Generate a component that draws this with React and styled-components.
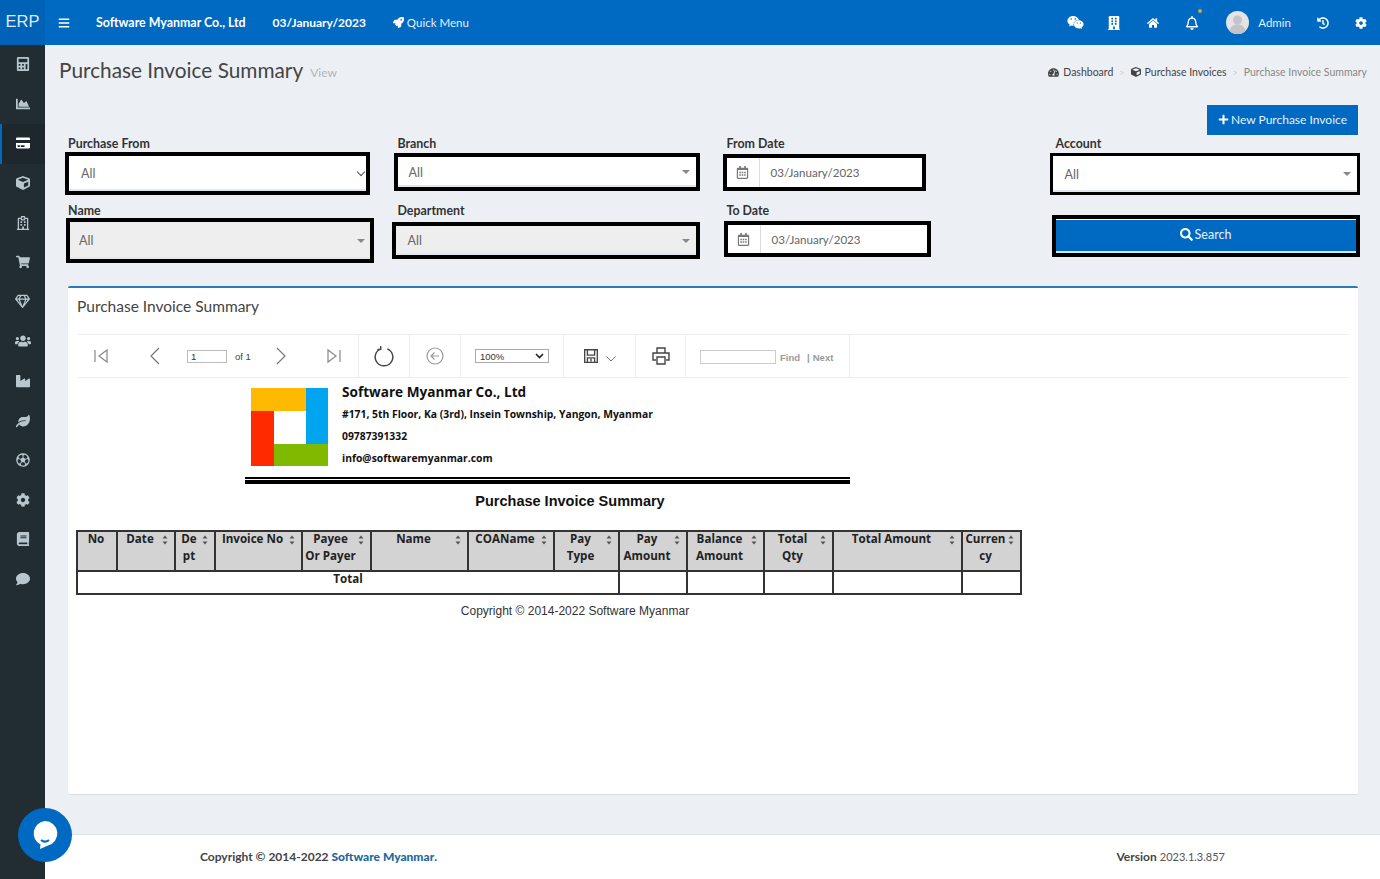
import React from 'react';
import styled, { createGlobalStyle } from 'styled-components';
import {
  FaBars, FaBook, FaBuilding, FaCalculator, FaChartArea, FaCog, FaComment, FaCreditCard, FaCube,
  FaHistory, FaHome, FaIndustry, FaLeaf, FaPlus, FaRegBell, FaRegCalendarAlt, FaRegFutbol, FaRegGem,
  FaRegHospital, FaRocket, FaSearch, FaShoppingCart, FaTachometerAlt, FaUsers, FaWeixin
} from 'react-icons/fa';

const uiFont = '"Lato", "Noto Sans", sans-serif';

const GlobalStyle = createGlobalStyle`
  html, body { margin: 0; padding: 0; }
  body { font-family: ${uiFont}; color: #333; background: #ecf0f5; }
  * { box-sizing: border-box; }
`;

// =============================================================================

const Shell = styled.div`
  position: relative;
  width: 1380px;
  height: 879px;
  overflow: hidden;
  display: grid;
  grid-template-columns: 45px 1fr;
  grid-template-rows: 45px 1fr;
`;

const Brand = styled.div`
  background: #0062b6;
  color: #dfeaf5;
  font: 16.5px/43px "Liberation Sans", sans-serif;
  text-align: center;
`;

const TopBar = styled.header`
  background: #0069c2;
  color: #fff;
  display: flex;
  align-items: center;
  padding-left: 13px;
`;

const TopTitle = styled.b`
  margin-left: ${p => p.$gap}px;
  font-size: ${p => p.$size}px;
`;

const QuickMenu = styled.span`
  margin-left: 27px;
  display: flex;
  align-items: center;
  gap: 3px;
  font-size: 11.5px;
  color: #e6f0fa;
`;

const TopRight = styled.div`
  margin-left: auto;
  display: flex;
  align-items: center;
  height: 100%;
`;

const TopIcon = styled.span`
  width: ${p => p.$w}px;
  display: flex;
  justify-content: center;
  position: relative;
  font-size: ${p => p.$size || 14}px;
`;

const Dot = styled.i`
  position: absolute;
  top: -7px;
  left: 25px;
  width: 4px;
  height: 4px;
  border-radius: 50%;
  background: #c9a35a;
`;

const Avatar = styled.svg`
  width: 23px;
  height: 23px;
  margin-left: 14.5px;
`;

const AdminName = styled.span`
  margin: 0 13px 0 9px;
  font-size: 11.5px;
  color: #e6f0fa;
`;

const Sidebar = styled.nav`
  background: #222d32;
  display: flex;
  flex-direction: column;
`;

const SideItem = styled.div`
  height: 39.6px;
  display: flex;
  align-items: center;
  justify-content: center;
  font-size: 14px;
  color: ${p => (p.$active ? '#fff' : '#b8c7ce')};
  background: ${p => (p.$active ? '#1e282c' : 'transparent')};
  border-left: 2px solid ${p => (p.$active ? '#0069c2' : 'transparent')};
  padding: 0 2px 1px 0;
`;

const Main = styled.main`
  display: flex;
  flex-direction: column;
  min-width: 0;
`;

const PageHead = styled.div`
  height: 60px;
  padding: 0 13px 11px 14px;
  display: flex;
  align-items: center;
`;

const PageTitle = styled.h1`
  margin: 0;
  font-size: 20.8px;
  font-weight: 400;
  color: #444;
`;

const PageSub = styled.small`
  margin: 5px 0 0 7px;
  font-size: 12px;
  color: #aeb4ba;
`;

const Crumbs = styled.div`
  margin: 5px 0 0 auto;
  display: flex;
  align-items: center;
  font-size: 10.5px;
  color: #444;
`;

const Crumb = styled.span`
  display: flex;
  align-items: center;
  gap: 4px;
  color: ${p => (p.$muted ? '#888' : '#444')};
`;

const CrumbSep = styled.span`
  margin: 0 6px;
  color: #ccc;
  font-size: 9px;
`;

const ActionRow = styled.div`
  height: 31px;
  padding-right: 22px;
  display: flex;
  justify-content: flex-end;
`;

const NewButton = styled.div`
  width: 151px;
  height: 30px;
  padding-bottom: 2px;
  background: #0069c2;
  color: #e8f1fa;
  font-size: 12px;
  display: flex;
  align-items: center;
  justify-content: center;
  gap: 2px;
  svg { color: #fff; font-size: 11px; }
`;

const FilterGrid = styled.div`
  display: grid;
  grid-template-columns: 329.5px 329px 329px 303px;
  grid-template-rows: 67px 83px;
  padding-left: 22px;
`;

const Field = styled.div`
  min-width: 0;
`;

const FieldLabel = styled.label`
  display: block;
  height: 14px;
  margin: 1px 0 0 1px;
  font-size: 12.4px;
  line-height: 14px;
  font-weight: 700;
  color: #333;
`;

const Outline = styled.div`
  width: ${p => p.$w}px;
  height: ${p => p.$h}px;
  margin-left: ${p => p.$x || 0}px;
  margin-top: ${p => p.$y || 0}px;
  border: ${p => p.$b || 4}px solid #000;
  background: #fff;
  display: flex;
`;

const SelectBox = styled.div`
  flex: 1;
  display: flex;
  align-items: center;
  justify-content: space-between;
  padding: 0 5.5px 0 ${p => p.$pad}px;
  font-size: 12.5px;
  color: #666;
  background: ${p => (p.$disabled ? '#eee' : '#fff')};
  box-shadow: inset 0 -2px 0 #e2e6ee;
`;

const Caret = styled.i`
  width: 0;
  height: 0;
  border: 4px solid transparent;
  border-top: 4px solid #888;
  border-bottom-width: 0;
`;

const Chevron = styled.i`
  width: 6px;
  height: 6px;
  margin: -3px -3px 0 0;
  border-right: 1.5px solid #555;
  border-bottom: 1.5px solid #555;
  transform: rotate(45deg);
`;

const CalendarAddon = styled.span`
  width: 33px;
  display: flex;
  align-items: center;
  justify-content: center;
  color: #777;
  font-size: 13px;
  border-right: 1px solid #ddd;
`;

const DateText = styled.span`
  flex: 1;
  align-self: center;
  padding-left: 11px;
  font-size: 11.6px;
  color: #666;
`;

const SearchButton = styled.div`
  flex: 1;
  display: flex;
  align-items: center;
  justify-content: center;
  gap: 2px;
  background: #0069c2;
  color: #e8f1fa;
  font-size: 12.5px;
  padding-bottom: 3px;
  border-top: 1px solid #fff;
  border-bottom: 2px solid #d8e6f3;
  svg { color: #fff; font-size: 13px; }
`;

const Card = styled.section`
  flex: 1;
  margin: 0 22px 40px 23px;
  background: #fff;
  border-top: 2px solid #2a7ab8;
  border-radius: 2px;
  box-shadow: 0 1px 1px rgba(0, 0, 0, 0.08);
  padding: 0 9px;
  min-height: 0;
`;

const CardTitle = styled.h3`
  margin: 0;
  height: 46px;
  font-size: 15.5px;
  line-height: 36px;
  font-weight: 400;
  color: #444;
`;

const Toolbar = styled.div`
  height: 44px;
  display: flex;
  border-top: 1px solid #eee;
  border-bottom: 1px solid #eee;
`;

const ToolCell = styled.div`
  flex: none;
  width: ${p => p.$w}px;
  display: flex;
  align-items: center;
  justify-content: ${p => (p.$start ? 'flex-start' : 'center')};
  border-right: 1px solid #eee;
  color: #555;
`;

const ToolSlot = styled.span`
  flex: none;
  width: ${p => p.$w}px;
  padding-left: ${p => p.$pl || 0}px;
  display: flex;
  justify-content: center;
`;

const PageInput = styled.span`
  flex: none;
  width: 40px;
  height: 13px;
  margin-left: 2px;
  border: 1px solid #bbb;
  font: 9.5px/11px "Liberation Sans", sans-serif;
  padding-left: 3px;
  color: #333;
`;

const OfText = styled.span`
  flex: none;
  width: 30px;
  margin-left: 8px;
  font: 9.5px "Liberation Sans", sans-serif;
  color: #444;
`;

const ZoomSelect = styled.span`
  width: 74px;
  height: 14px;
  border: 1px solid #aaa;
  display: flex;
  align-items: center;
  justify-content: space-between;
  padding: 0 4px;
  font: 9.5px "Liberation Sans", sans-serif;
  color: #333;
`;

const FindInput = styled.span`
  width: 76px;
  height: 14px;
  margin: 2px 4px 0 14px;
  border: 1px solid #ccc;
`;

const FindLink = styled.span`
  margin-top: 2px;
  margin-right: ${p => p.$gap || 0}px;
  font: 700 9.5px "Liberation Sans", sans-serif;
  color: #999;
`;

const ReportHead = styled.div`
  display: flex;
  gap: 14px;
  padding: 10px 0 0 174px;
  height: 99px;
`;

const ReportLines = styled.div`
  display: flex;
  flex-direction: column;
  font-family: "Open Sans", sans-serif;
  color: #111;
`;

const Company = styled.b`
  font-size: 13.6px;
  line-height: 8px;
  height: 15px;
`;

const CompanyLine = styled.b`
  font-size: 10.35px;
  line-height: 22px;
  height: 22px;
`;

const DoubleRule = styled.div`
  width: 605px;
  height: 7px;
  margin-left: 168px;
  border-top: 2px solid #000;
  border-bottom: 4px solid #000;
`;

const ReportTitle = styled.div`
  width: 986px;
  margin-top: 8px;
  height: 38px;
  text-align: center;
  font: 700 14.5px/18px "Liberation Sans", sans-serif;
  color: #111;
`;

const SummaryTable = styled.table`
  width: 944px;
  margin-left: -1px;
  table-layout: fixed;
  border-collapse: collapse;
  font-family: "Open Sans", sans-serif;
  font-size: 11.6px;
  color: #222;
  th, td { border: 2px solid #333; padding: 0; }
  th { background: #d3d3d3; height: 40px; vertical-align: top; }
  td { height: 23px; vertical-align: top; font-weight: 700; text-align: center; line-height: 13px; }
`;

const HeadInner = styled.div`
  display: grid;
  grid-template-columns: 1fr ${p => (p.$sort ? '10px' : '0')};
  margin-top: -2px;
  padding: 0 4px 0 2px;
  line-height: 17px;
  text-align: center;
  white-space: nowrap;
`;

const SortMark = styled.svg`
  width: 6px;
  height: 10px;
  margin: 5px 0 0 2px;
`;

const Copy = styled.div`
  width: 996px;
  margin-top: 9px;
  text-align: center;
  font: 12px "Liberation Sans", sans-serif;
  color: #333;
`;

const Footer = styled.footer`
  height: 45px;
  flex: none;
  background: #fff;
  border-top: 1px solid #dde1e7;
  display: flex;
  align-items: center;
  padding: 0 155px 2px;
  justify-content: space-between;
  font-size: 12px;
  color: #444;
`;

const FooterLink = styled.b`
  color: #23689f;
`;

const VersionText = styled.span`
  font-size: 11px;
  font-weight: 400;
  color: #555;
`;

const ChatBubble = styled.div`
  position: absolute;
  left: 18px;
  top: 808px;
  width: 54px;
  height: 54px;
  border-radius: 50%;
  background: #0069c2;
  display: flex;
  align-items: center;
  justify-content: center;
`;

// =============================================================================

const sideIcons = [
  [FaCalculator], [FaChartArea], [FaCreditCard], [FaCube], [FaRegHospital], [FaShoppingCart], [FaRegGem, 15],
  [FaUsers, 16], [FaIndustry], [FaLeaf], [FaRegFutbol], [FaCog], [FaBook], [FaComment]
];

const cols = [40, 58, 40, 87, 69, 97, 86, 65, 68, 77, 69, 129, 59];

const heads = [
  ['No'], ['Date'], ['De', 'pt'], ['Invoice No'], ['Payee', 'Or Payer'], ['Name'], ['COAName'],
  ['Pay', 'Type'], ['Pay', 'Amount'], ['Balance', 'Amount'], ['Total', 'Qty'], ['Total Amount'], ['Curren', 'cy']
];

const Sort = () =>
  <SortMark viewBox="0 0 6 10">
    <path d="M3 0.500 5.500 3.500H0.500zM3 9.500 0.500 6.500H5.500z" fill="#555" />
  </SortMark>;

const ToolIcon = ({ w = 20, h = 20, children }) =>
  <svg width={w} height={h} viewBox="0 0 20 20" fill="none" stroke="#666" strokeWidth="1.2">
    {children}
  </svg>;

const SelectField = ({ label, w, h, x, y, b, pad = 12, disabled, chevron }) =>
  <Field>
    <FieldLabel>{label}</FieldLabel>
    <Outline $w={w} $h={h} $x={x} $y={y} $b={b}>
      <SelectBox $pad={pad} $disabled={disabled}>
        All
        {chevron ? <Chevron /> : <Caret />}
      </SelectBox>
    </Outline>
  </Field>;

const DateField = ({ label, w, h, x, y }) =>
  <Field>
    <FieldLabel>{label}</FieldLabel>
    <Outline $w={w} $h={h} $x={x} $y={y}>
      <CalendarAddon><FaRegCalendarAlt /></CalendarAddon>
      <DateText>03/January/2023</DateText>
    </Outline>
  </Field>;

export default function App() {
  return (
    <Shell>
      <GlobalStyle />
      <Brand>ERP</Brand>
      <TopBar>
        <FaBars size={12} />
        <TopTitle $gap={26} $size={12.4}>Software Myanmar Co., Ltd</TopTitle>
        <TopTitle $gap={27} $size={12}>03/January/2023</TopTitle>
        <QuickMenu><FaRocket size={11} color="#fff" />Quick Menu</QuickMenu>
        <TopRight>
          <TopIcon $w={39} $size={17}><FaWeixin /></TopIcon>
          <TopIcon $w={39}><FaBuilding /></TopIcon>
          <TopIcon $w={39} $size={12}><FaHome /></TopIcon>
          <TopIcon $w={39}><FaRegBell /><Dot /></TopIcon>
          <Avatar viewBox="0 0 23 23">
            <circle cx="11.500" cy="11.500" r="11.500" fill="#e4e4e6" />
            <circle cx="11.500" cy="9" r="4.500" fill="#c4c4c8" />
            <path d="M3.500 20c1-5 4.500-6.500 8-6.500s7 1.500 8 6.500a11.500 11.500 0 0 1-16 0z" fill="#c4c4c8" />
          </Avatar>
          <AdminName>Admin</AdminName>
          <TopIcon $w={38} $size={12}><FaHistory /></TopIcon>
          <TopIcon $w={38} $size={12}><FaCog /></TopIcon>
        </TopRight>
      </TopBar>

      <Sidebar>
        {sideIcons.map(([Icon, size], i) =>
          <SideItem key={i} $active={i === 2}><Icon size={size} /></SideItem>
        )}
      </Sidebar>

      <Main>
        <PageHead>
          <PageTitle>Purchase Invoice Summary</PageTitle>
          <PageSub>View</PageSub>
          <Crumbs>
            <Crumb><FaTachometerAlt size={11} />Dashboard</Crumb>
            <CrumbSep>&gt;</CrumbSep>
            <Crumb><FaCube size={10} />Purchase Invoices</Crumb>
            <CrumbSep>&gt;</CrumbSep>
            <Crumb $muted>Purchase Invoice Summary</Crumb>
          </Crumbs>
        </PageHead>

        <ActionRow>
          <NewButton><FaPlus />New Purchase Invoice</NewButton>
        </ActionRow>

        <FilterGrid>
          <SelectField label="Purchase From" w={305} h={43} x={-2} y={1} pad={12} chevron />
          <SelectField label="Branch" w={306} h={38} x={-3} y={2} pad={11} />
          <DateField label="From Date" w={203} h={37} x={-3} y={3} />
          <SelectField label="Account" w={310} h={42} x={-5} y={2} b={3} pad={12} />

          <SelectField label="Name" w={308} h={45} x={-1} y={0} pad={9} disabled />
          <SelectField label="Department" w={308} h={37} x={-5} y={4} pad={12} disabled />
          <DateField label="To Date" w={207} h={36} x={-2} y={3} />
          <Field>
            <Outline $w={308} $h={42} $x={-3} $y={12}>
              <SearchButton><FaSearch />Search</SearchButton>
            </Outline>
          </Field>
        </FilterGrid>

        <Card>
          <CardTitle>Purchase Invoice Summary</CardTitle>
          <Toolbar>
            <ToolCell $w={282} $start>
              <ToolSlot $w={48}>
                <ToolIcon><path d="M4 4v12M16 4 8 10l8 6z" stroke="#888" /></ToolIcon>
              </ToolSlot>
              <ToolSlot $w={60}>
                <ToolIcon><path d="M14 2 6 10l8 8" stroke="#777" /></ToolIcon>
              </ToolSlot>
              <PageInput>1</PageInput>
              <OfText>of 1</OfText>
              <ToolSlot $w={32}>
                <ToolIcon><path d="M6 2l8 8-8 8" stroke="#777" /></ToolIcon>
              </ToolSlot>
              <ToolSlot $w={62} $pl={12}>
                <ToolIcon><path d="M16 4v12M4 4l8 6-8 6z" stroke="#888" /></ToolIcon>
              </ToolSlot>
            </ToolCell>
            <ToolCell $w={51}>
              <ToolIcon w={22} h={22}><path d="M7 3.500a8 8 0 1 0 6 0M7 1v3H4" strokeWidth="1.300" stroke="#444" /></ToolIcon>
            </ToolCell>
            <ToolCell $w={51}>
              <ToolIcon w={20} h={20}>
                <circle cx="10" cy="10" r="8" stroke="#999" />
                <path d="M14 10H6M9.500 6.500 6 10l3.500 3.500" stroke="#999" />
              </ToolIcon>
            </ToolCell>
            <ToolCell $w={103}>
              <ZoomSelect>
                100%
                <svg width="9" height="6" viewBox="0 0 9 6"><path d="M1 1l3.500 3.500L8 1" fill="none" stroke="#222" strokeWidth="1.600" /></svg>
              </ZoomSelect>
            </ToolCell>
            <ToolCell $w={72}>
              <ToolIcon w={18} h={18}>
                <path d="M3 3h14v14H3zM6 3v6h8V3M6 17v-5h8v5M10 13v3" stroke="#444" strokeWidth="1.500" />
              </ToolIcon>
              <svg width="12" height="8" viewBox="0 0 12 8" style={{ marginLeft: 5, marginTop: 6 }}>
                <path d="M1.500 1.500 6 6l4.500-4.500" fill="none" stroke="#777" />
              </svg>
            </ToolCell>
            <ToolCell $w={50}>
              <ToolIcon>
                <path d="M6 7V2h8v5M5 14H2V7h16v7h-3M6 11h8v7H6z" stroke="#444" strokeWidth="1.400" />
              </ToolIcon>
            </ToolCell>
            <ToolCell $w={164} $start>
              <FindInput />
              <FindLink $gap={7}>Find</FindLink>
              <FindLink $gap={3}>|</FindLink>
              <FindLink>Next</FindLink>
            </ToolCell>
          </Toolbar>

          <ReportHead>
            <svg width="77" height="78" viewBox="0 0 77 78">
              <rect width="55" height="23" fill="#ffb900" />
              <rect x="55" width="22" height="56" fill="#00a4ef" />
              <rect y="23" width="23" height="55" fill="#ff2a00" />
              <rect x="23" y="56" width="54" height="22" fill="#7fba00" />
            </svg>
            <ReportLines>
              <Company>Software Myanmar Co., Ltd</Company>
              <CompanyLine>#171, 5th Floor, Ka (3rd), Insein Township, Yangon, Myanmar</CompanyLine>
              <CompanyLine>09787391332</CompanyLine>
              <CompanyLine>info@softwaremyanmar.com</CompanyLine>
            </ReportLines>
          </ReportHead>
          <DoubleRule />
          <ReportTitle>Purchase Invoice Summary</ReportTitle>

          <SummaryTable>
            <colgroup>
              {cols.map((w, i) => <col key={i} style={{ width: w }} />)}
            </colgroup>
            <thead>
              <tr>
                {heads.map((lines, i) =>
                  <th key={i}>
                    <HeadInner $sort={i > 0}>
                      <span>{lines.map(l => <div key={l}>{l}</div>)}</span>
                      {i > 0 && <Sort />}
                    </HeadInner>
                  </th>
                )}
              </tr>
            </thead>
            <tbody>
              <tr>
                <td colSpan={8}>Total</td>
                <td /><td /><td /><td /><td /><td />
              </tr>
            </tbody>
          </SummaryTable>
          <Copy>Copyright © 2014-2022 Software Myanmar</Copy>
        </Card>

        <Footer>
          <b>Copyright © 2014-2022 <FooterLink>Software Myanmar</FooterLink>.</b>
          <span><b>Version</b> <VersionText>2023.1.3.857</VersionText></span>
        </Footer>
      </Main>

      <ChatBubble>
        <svg width="28" height="30" viewBox="0 0 28 30">
          <path d="M14 1a12.500 12.500 0 0 1 3 24.600L9 29l.5-4.400A12.500 12.500 0 0 1 14 1z" fill="#fff" />
          <path d="M10 20c2.500 2 5.500 2 8 0" fill="none" stroke="#0069c2" strokeWidth="2" />
        </svg>
      </ChatBubble>
    </Shell>
  );
}
